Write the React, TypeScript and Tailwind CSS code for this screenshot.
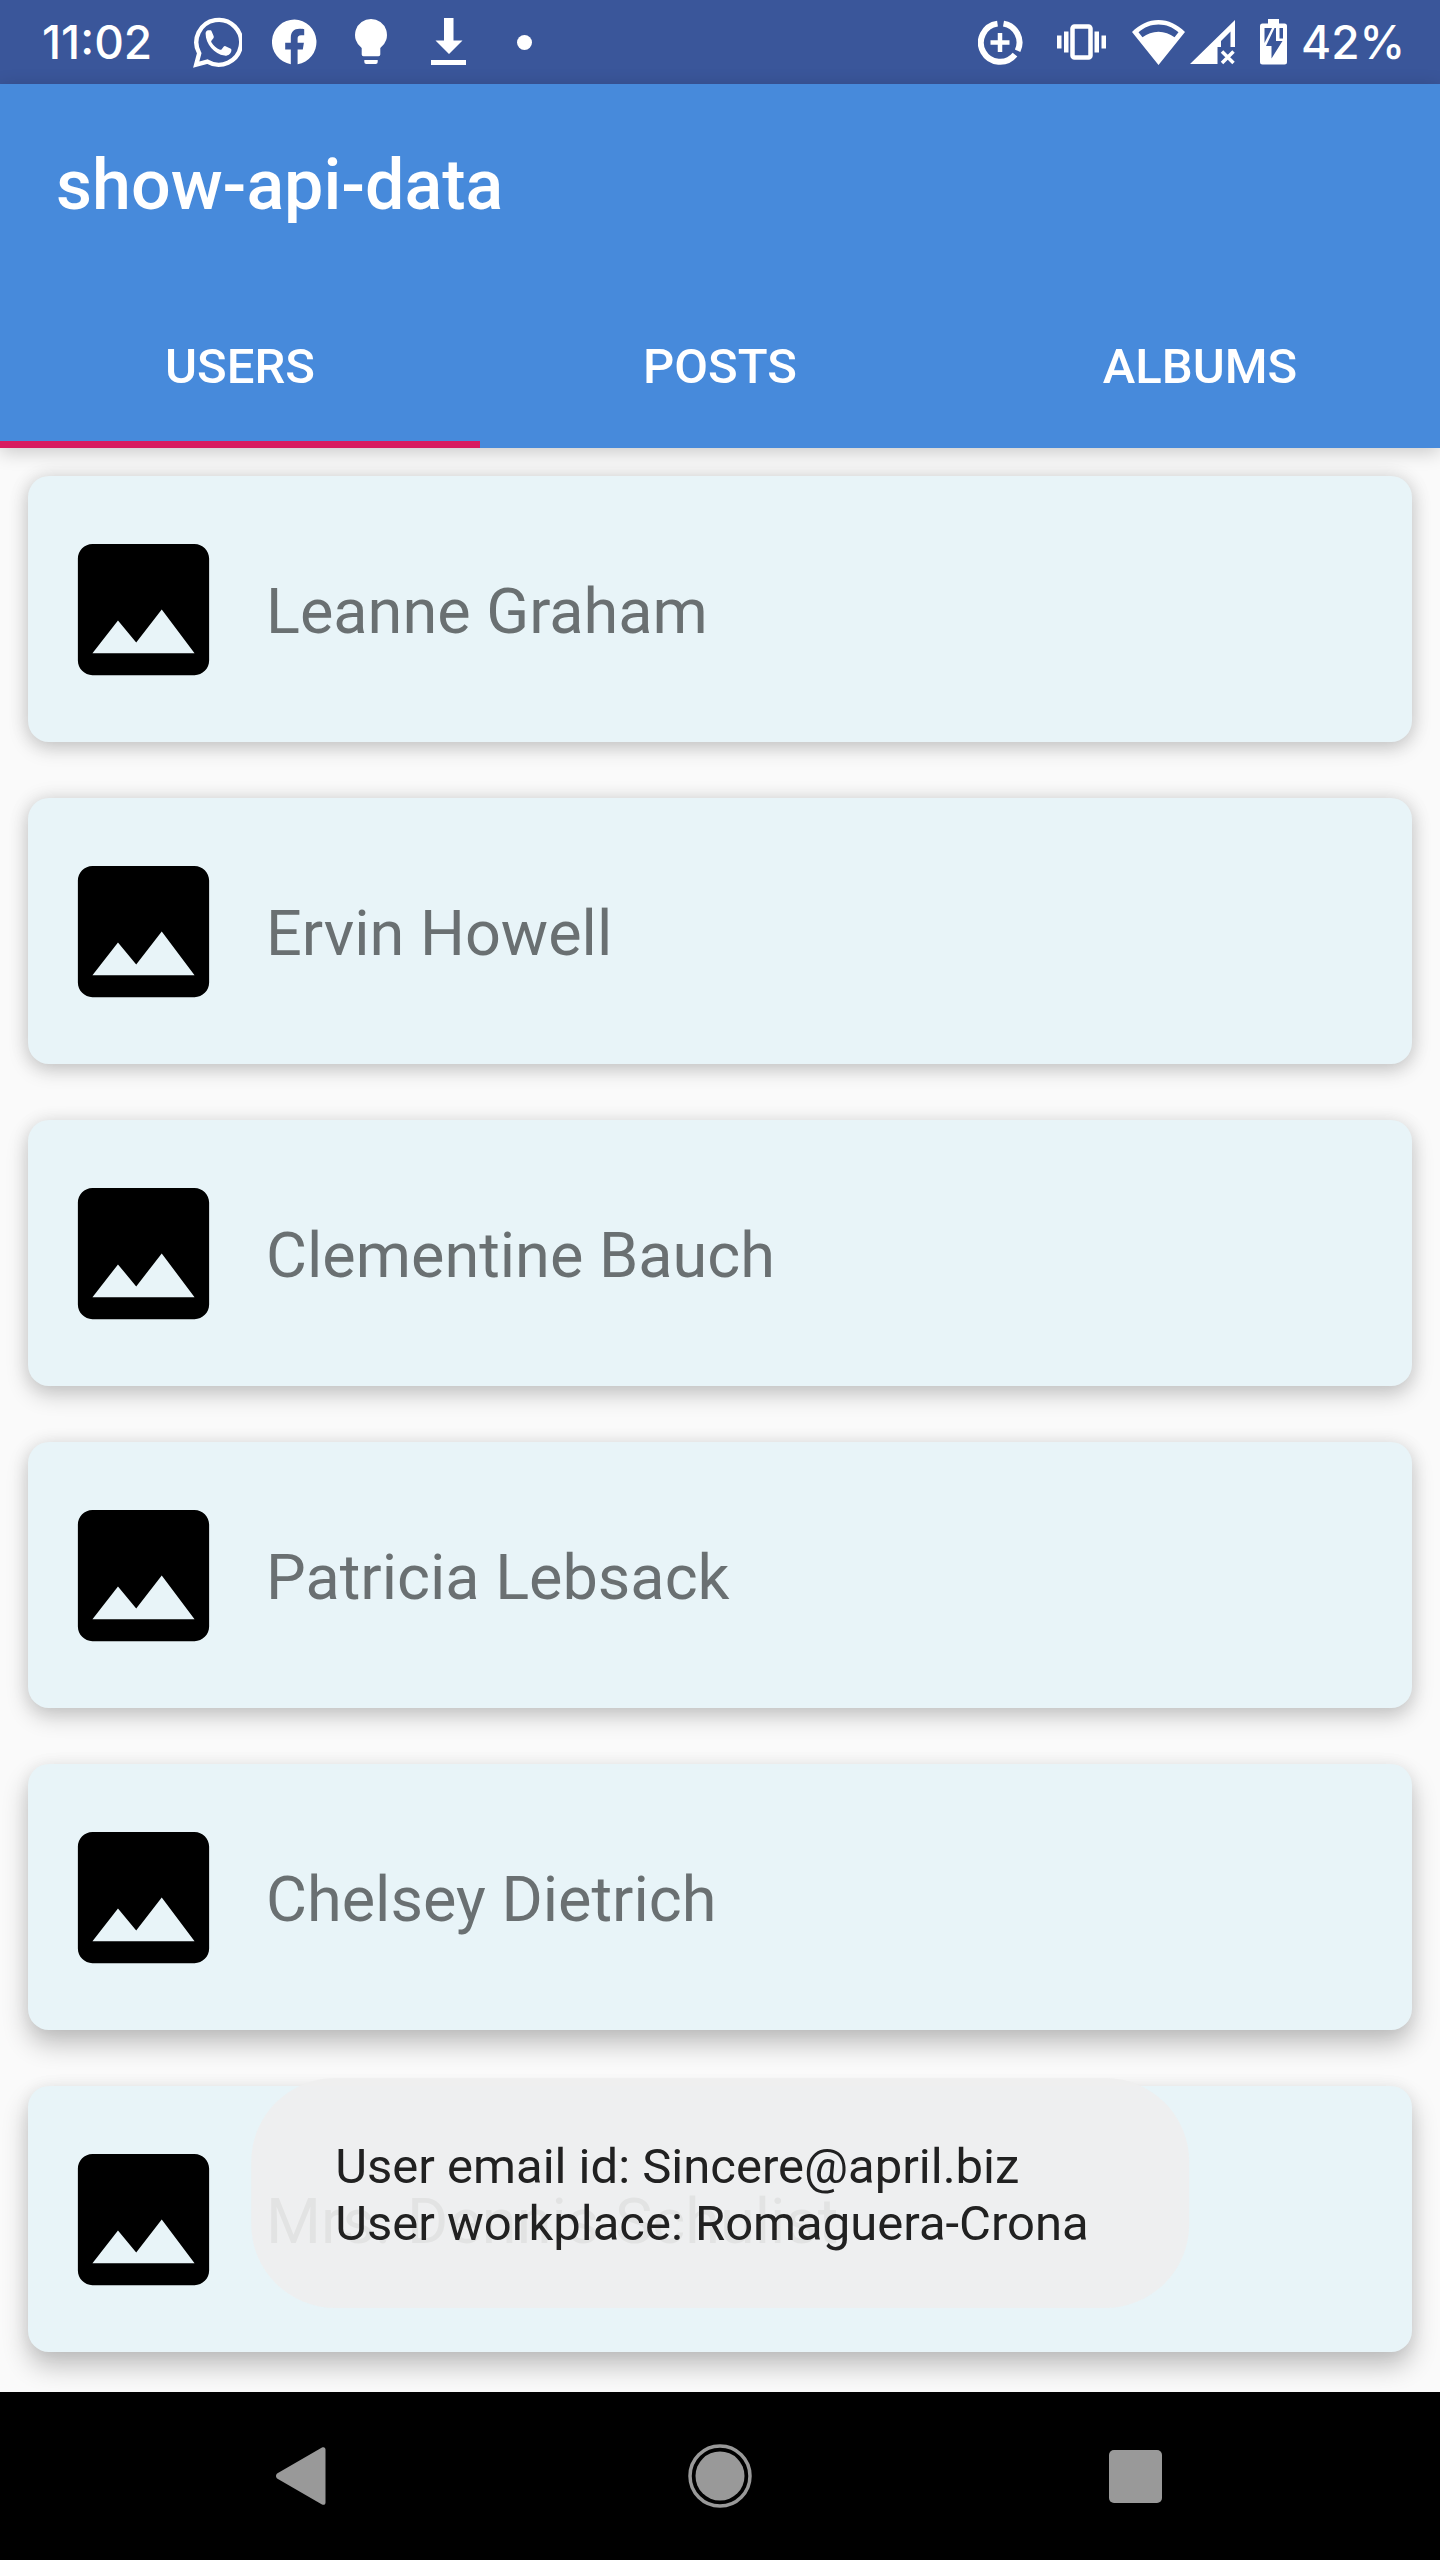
import React from 'react';

const SHADOW_LOW = 'shadow-[0_6px_20px_rgba(0,0,0,0.18),0_0_20px_rgba(0,0,0,0.1)]';
const SHADOW_MID = 'shadow-[0_9px_22px_rgba(0,0,0,0.2),0_0_18px_rgba(0,0,0,0.08)]';
const SHADOW_HIGH = 'shadow-[0_14px_26px_rgba(0,0,0,0.24),0_0_16px_rgba(0,0,0,0.06)]';

const users = [
  { name: 'Leanne Graham', shadow: SHADOW_LOW },
  { name: 'Ervin Howell', shadow: SHADOW_LOW },
  { name: 'Clementine Bauch', shadow: SHADOW_MID },
  { name: 'Patricia Lebsack', shadow: SHADOW_MID },
  { name: 'Chelsey Dietrich', shadow: SHADOW_HIGH },
  { name: 'Mrs. Dennis Schulist', shadow: SHADOW_HIGH },
];

const tabs = ['USERS', 'POSTS', 'ALBUMS'];

function WhatsAppIcon() {
  return (
    <svg className="h-[52px] w-[49px]" viewBox="0 0 49 52" aria-hidden="true">
      <path
        fill="none"
        stroke="white"
        strokeWidth="4.4"
        strokeLinejoin="miter"
        d="M3.2 48.6 6.2 37.2A22.4 22.4 0 1 1 14.4 45.6Z"
      />
      <path
        fill="white"
        d="M12.6 17.4c0-1.7 1.2-3.2 2.6-3.2h2c.8 0 1.2.4 1.5 1.2l2 4.9c.3.7.1 1.3-.3 1.9l-2 2.6c-.4.4-.3.9 0 1.4 2.2 3.6 5 5.9 8.6 7.5.6.3 1.1.2 1.5-.3l2.3-2.8c.5-.6 1-.7 1.7-.4l4.8 2.3c.8.4 1.2.8 1.1 1.7-.2 4-3.9 5.9-7 5.4-9.9-1.7-18.8-11.6-18.8-22.2Z"
      />
    </svg>
  );
}

function FacebookIcon() {
  return (
    <svg className="h-12 w-[45px]" viewBox="0 0 45 48" aria-hidden="true">
      <path
        fill="white"
        d="M22.5 1.5a22.5 22.5 0 0 0-3.7 44.7V31.4h-5.6v-6.6h5.6v-5.1c0-5.8 3.3-8.9 8.5-8.9 2.4 0 4.4.3 4.9.4v6h-3.1c-2.6 0-3.5 1.6-3.5 3.4v4.2h6.3l-1.1 6.6h-5.2v14.8a22.5 22.5 0 0 0-3.1-44.7Z"
      />
    </svg>
  );
}

function BulbIcon() {
  return (
    <svg className="h-[46px] w-8" viewBox="0 0 32 46" aria-hidden="true">
      <path
        fill="white"
        d="M16 0a16 16 0 0 0-9.3 29v6.5a1.8 1.8 0 0 0 1.8 1.8h15a1.8 1.8 0 0 0 1.8-1.8V29A16 16 0 0 0 16 0ZM9.3 41h13.4v2a2 2 0 0 1-2 2h-9.4a2 2 0 0 1-2-2Z"
      />
    </svg>
  );
}

function DownloadIcon() {
  return (
    <svg className="h-12 w-[35px]" viewBox="0 0 35 48" aria-hidden="true">
      <path fill="white" d="M13 0h9.5v22.5h9L18 36 4.5 22.5H13ZM0 42h35v5H0Z" />
    </svg>
  );
}

function DataSaverIcon() {
  return (
    <svg className="h-[45px] w-[45px]" viewBox="0 0 45 45" aria-hidden="true">
      <g fill="none" stroke="white">
        <path
          strokeWidth="6"
          d="M19.5 3.6A19.2 19.2 0 1 0 37 34.7M25.5 3.6A19.2 19.2 0 0 1 39.6 30.8"
        />
        <path strokeWidth="4.5" d="M22 13v19M12.5 22.5h19" />
      </g>
    </svg>
  );
}

function VibrateIcon() {
  return (
    <svg className="h-9 w-[49px]" viewBox="0 0 49 36" aria-hidden="true">
      <path
        fill="white"
        d="M0 11.5h4.5v13H0ZM7 7.5h4.5v21H7ZM37.5 7.5H42v21h-4.5ZM44.5 11.5H49v13h-4.5Z"
      />
      <rect x="15.5" y="2.5" width="18" height="31" rx="2" fill="none" stroke="white" strokeWidth="4.5" />
    </svg>
  );
}

function WifiIcon() {
  return (
    <svg className="h-[45px] w-[53px]" viewBox="0 0 53 45" aria-hidden="true">
      <path
        fill="white"
        fillRule="evenodd"
        d="M26.5 0C16.5 0 7.5 4.5 0 12l26.5 33L53 12C45.5 4.5 36.5 0 26.5 0Zm0 4.5c-7.5 0-14.2 2.7-20 7.8l4 5c4.7-3.5 10-5.6 16-5.6s11.3 2.1 16 5.6l4-5c-5.8-5.1-12.5-7.8-20-7.8Z"
      />
    </svg>
  );
}

function SignalIcon() {
  return (
    <svg className="h-[45px] w-[45px]" viewBox="0 0 45 45" aria-hidden="true">
      <path fill="white" fillRule="evenodd" d="M45 0v27h-4.5V11.5L31 21v6h-3.5v17H0Z" />
      <path fill="none" stroke="white" strokeWidth="3.5" d="m32 31.5 11.5 11.5M43.5 31.5 32 43" />
    </svg>
  );
}

function BatteryIcon() {
  return (
    <svg className="h-[46px] w-[27px]" viewBox="0 0 27 46" aria-hidden="true">
      <path
        fill="white"
        d="M8 0h11v4.5h5.5A2.5 2.5 0 0 1 27 7v36a2.5 2.5 0 0 1-2.5 2.5h-22A2.5 2.5 0 0 1 0 43V7a2.5 2.5 0 0 1 2.5-2.5H8Z"
      />
      <path fill="#3a569a" d="M4.5 9H12L4.5 24ZM14.5 9 6 27h5.5v12.5L22.5 22H16V9ZM19.5 9h3.5v10.5h-3.5Z" />
    </svg>
  );
}

function ImageIcon() {
  return (
    <svg className="h-[175px] w-[175px] shrink-0" viewBox="0 0 24 24" aria-hidden="true">
      <path d="M21 19V5c0-1.1-.9-2-2-2H5c-1.1 0-2 .9-2 2v14c0 1.1.9 2 2 2h14c1.1 0 2-.9 2-2zM8.5 13.5l2.5 3.01L14.5 12l4.5 6H5l3.5-4.5z" />
    </svg>
  );
}

function StatusBar() {
  return (
    <div className="flex h-[84px] items-center justify-between bg-[#3a569a] px-[42px] font-['Inter',sans-serif] text-[46px] font-medium text-white">
      <div className="flex items-center">
        <time className="w-[151px]">11:02</time>
        <WhatsAppIcon />
        <div className="flex items-center gap-[38px] pl-[30px]">
          <FacebookIcon />
          <BulbIcon />
          <div className="pl-[6px]">
            <DownloadIcon />
          </div>
        </div>
        <span className="ml-[51px] size-[15px] rounded-full bg-white" />
      </div>
      <div className="flex items-center">
        <DataSaverIcon />
        <div className="flex items-center pl-[34px]">
          <VibrateIcon />
        </div>
        <div className="flex items-center gap-[5px] pl-[26px]">
          <WifiIcon />
          <SignalIcon />
        </div>
        <div className="flex items-center gap-[14px] pl-[25px]">
          <BatteryIcon />
          <span className="w-[97px] whitespace-nowrap">42%</span>
        </div>
      </div>
    </div>
  );
}

function AppBar() {
  return (
    <header className="relative z-10 bg-[#478adb] text-white shadow-[0_4px_18px_rgba(0,0,0,0.2)]">
      <h1 className="flex h-[196px] items-center px-14 pt-[6px] text-[70px] leading-[82px] font-medium">show-api-data</h1>
      <div role="tablist" className="grid h-[168px] grid-cols-3">
        {tabs.map((tab, i) => (
          <button
            key={tab}
            type="button"
            role="tab"
            aria-selected={i === 0}
            className={
              i === 0
                ? 'border-b-[7px] border-[#d81b60] pt-3 text-[49px] font-medium'
                : 'border-b-[7px] border-transparent pt-3 text-[49px] font-medium'
            }
          >
            {tab}
          </button>
        ))}
      </div>
    </header>
  );
}

export default function App() {
  return (
    <div className="flex min-h-screen flex-col bg-[#fafafa] font-['Roboto',sans-serif]">
      <StatusBar />
      <AppBar />
      <main className="relative flex-1 px-7 pt-7 pb-[40px]">
        <ul className="flex flex-col gap-14">
          {users.map(({ name, shadow }) => (
            <li
              key={name}
              className={`flex h-[266px] items-center gap-[35px] rounded-[21px] bg-[#e8f4f8] px-7 ${shadow}`}
            >
              <ImageIcon />
              <span className="pt-[6px] text-[63px] leading-[74px] text-[#6a7072]">{name}</span>
            </li>
          ))}
        </ul>
        <div
          role="status"
          className="absolute bottom-[84px] left-1/2 w-max -translate-x-1/2 rounded-[84px] bg-[#eeeeee]/91 pt-[60px] pr-[100px] pb-[56px] pl-[84px] text-[49px] leading-[57px] text-[#212121]"
        >
          <p>User email id: Sincere@april.biz</p>
          <p>User workplace: Romaguera-Crona</p>
        </div>
      </main>
      <nav className="relative grid h-[168px] grid-cols-[1fr_228px_1fr] items-center bg-black text-[#999999]">
        <button type="button" aria-label="Back" className="flex justify-end pr-[280px]">
          <svg className="h-[58px] w-[50px]" viewBox="0 0 50 58" aria-hidden="true">
            <path fill="currentColor" d="M46 .6 1.5 26.2c-2 1.2-2 4.4 0 5.6L46 57.4c2 1 3.5 0 3.5-2V2.6c0-2-1.5-3-3.5-2Z" />
          </svg>
        </button>
        <button type="button" aria-label="Home" className="flex justify-center">
          <svg className="size-16" viewBox="0 0 64 64" aria-hidden="true">
            <circle cx="32" cy="32" r="30" fill="none" stroke="currentColor" strokeWidth="3.5" />
            <circle cx="32" cy="32" r="24.5" fill="currentColor" />
          </svg>
        </button>
        <button type="button" aria-label="Recent apps" className="flex justify-start pl-[275px]">
          <span className="size-[53px] rounded-[5px] bg-current" />
        </button>
      </nav>
    </div>
  );
}
